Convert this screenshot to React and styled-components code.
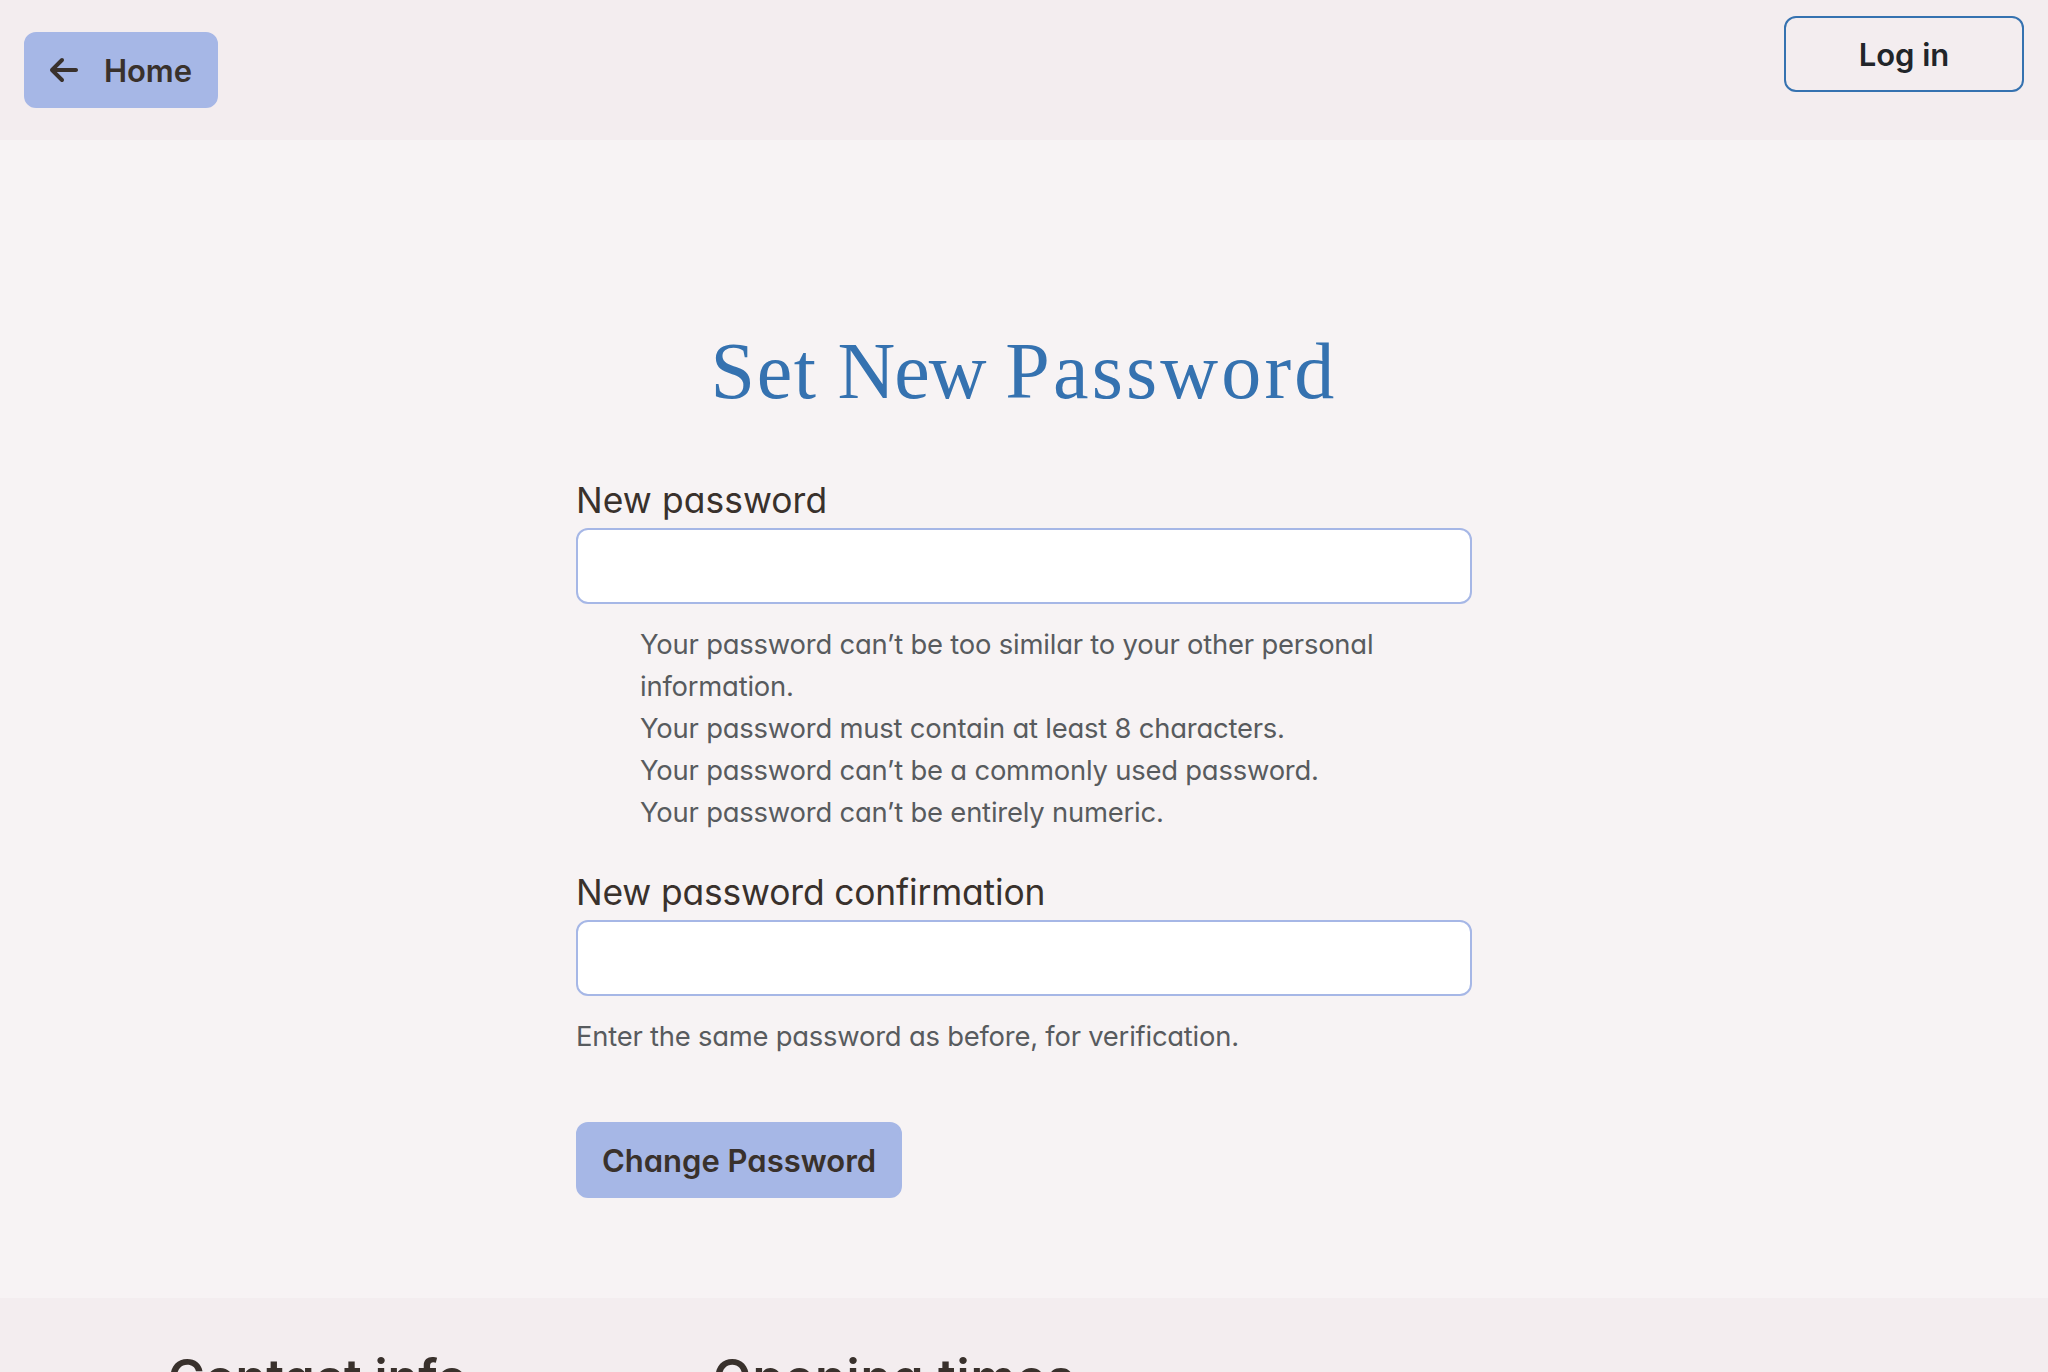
import React from 'react';
import styled, { createGlobalStyle } from 'styled-components';
import { FaArrowLeft } from 'react-icons/fa6';

const GlobalStyle = createGlobalStyle`
  * { box-sizing: border-box; }
  body {
    margin: 0;
    background: #f7f3f4;
    color: #39312c;
    font-family: Inter, "Open Sans", sans-serif;
    font-feature-settings: "cv11";
  }
`;

const Page = styled.div`
  display: flex;
  flex-direction: column;
  height: 1372px;
  overflow: hidden;
`;

const Header = styled.header`
  display: flex;
  justify-content: space-between;
  align-items: flex-start;
  height: 140px;
  padding: 16px 24px;
  background: #f3edef;
`;

const Button = styled.button`
  display: inline-flex;
  align-items: center;
  justify-content: center;
  gap: 26px;
  width: ${(p) => p.$width}px;
  height: 76px;
  margin-top: ${(p) => p.$top || 0}px;
  padding: 0;
  border: 2px solid ${(p) => (p.$outline ? '#3572b0' : '#a6b7e6')};
  border-radius: 12px;
  background: ${(p) => (p.$outline ? 'transparent' : '#a6b7e6')};
  color: ${(p) => (p.$outline ? '#212529' : '#39312c')};
  font: inherit;
  font-feature-settings: inherit;
  font-size: 31px;
  font-weight: 600;
  white-space: nowrap;
`;

const ArrowIcon = styled(FaArrowLeft)`
  width: 28px;
  height: 32px;
`;

const Main = styled.main`
  flex: none;
  height: 1158px;
  padding-top: 183px;
`;

const Title = styled.h1`
  margin: 0 0 59px;
  text-align: center;
  font-family: "Liberation Serif", serif;
  font-size: 80px;
  font-weight: 400;
  line-height: 96px;
  letter-spacing: 1.7px;
  word-spacing: -2px;
  color: #3572b0;
`;

const Word = styled.span`
  letter-spacing: ${(p) => p.$tracking}px;
`;

const Form = styled.form`
  width: 896px;
  margin: 0 auto;
`;

const Label = styled.label`
  display: block;
  height: 50px;
  font-size: 35.4px;
  line-height: 46px;
  letter-spacing: ${(p) => p.$tracking || 0}px;
`;

const Input = styled.input`
  display: block;
  width: 100%;
  height: 76px;
  border: 2px solid #a6b7e6;
  border-radius: 12px;
  background: #fff;
`;

const HelpList = styled.ul`
  margin: 19px 0 37px;
  padding: 0 0 0 64px;
  list-style: none;
`;

const Help = styled.li`
  font-size: 27.4px;
  line-height: 42px;
  color: #585b5e;
  letter-spacing: -0.2px;
`;

const HelpText = styled(Help).attrs({ as: 'p' })`
  margin: 19px 0 65px;
  letter-spacing: -0.22px;
`;

const Footer = styled.footer`
  display: flex;
  height: 74px;
  padding: 48px 168px 0;
  background: #f3edef;
`;

const FooterTitle = styled.h2`
  flex: none;
  width: 545px;
  margin: 0;
  font-size: 50px;
  font-weight: 600;
  line-height: 62px;
  letter-spacing: ${(p) => p.$tracking}px;
  white-space: nowrap;
`;

export default function App() {
  return (
    <>
      <GlobalStyle />
      <Page>
        <Header>
          <Button $width={194} $top={16}><ArrowIcon />Home</Button>
          <Button $width={240} $outline>Log in</Button>
        </Header>
        <Main>
          <Title>
            Set <Word $tracking={-1}>New</Word> <Word $tracking={3.2}>Password</Word>
          </Title>
          <Form>
            <Label $tracking={0.08}>New password</Label>
            <Input type="password" />
            <HelpList>
              <Help>Your password can’t be too similar to your other personal information.</Help>
              <Help>Your password must contain at least 8 characters.</Help>
              <Help>Your password can’t be a commonly used password.</Help>
              <Help>Your password can’t be entirely numeric.</Help>
            </HelpList>
            <Label $tracking={-0.15}>New password confirmation</Label>
            <Input type="password" />
            <HelpText>Enter the same password as before, for verification.</HelpText>
            <Button $width={326} type="button">Change Password</Button>
          </Form>
        </Main>
        <Footer>
          <FooterTitle $tracking={0.1}>Contact info</FooterTitle>
          <FooterTitle $tracking={0.95}>Opening times</FooterTitle>
        </Footer>
      </Page>
    </>
  );
}
